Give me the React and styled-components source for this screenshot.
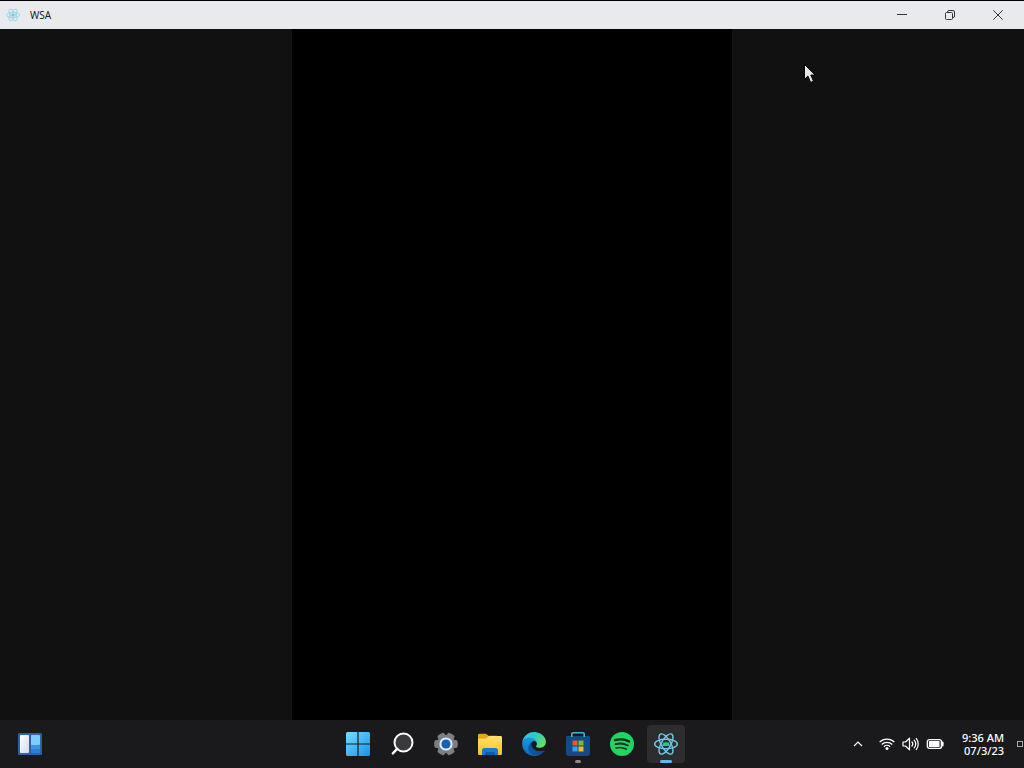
import React from 'react';
import styled, { createGlobalStyle } from 'styled-components';

const GlobalStyle = createGlobalStyle`
  * { box-sizing: border-box; }
  body {
    margin: 0;
    background: #000;
    font-family: "Noto Sans", "Open Sans", sans-serif;
  }
  button { font: inherit; }
`;

const Desktop = styled.div`
  position: relative;
  display: flex;
  flex-direction: column;
  min-height: 100vh;
`;

const TitleBar = styled.header`
  display: flex;
  align-items: center;
  height: 29px;
  padding: 0 2px 0 6px;
  border-top: 1px solid #000;
  background: #e8eaed;
  color: #202124;
`;

const AppTitle = styled.h1`
  flex: 1;
  margin: 0 0 0 10px;
  font-size: 10px;
  font-weight: 400;
  line-height: 14px;
`;

const WindowButton = styled.button`
  display: grid;
  place-items: center;
  width: 48px;
  height: 28px;
  padding: 0;
  border: 0;
  background: transparent;
  color: #333538;
`;

const Content = styled.main`
  display: flex;
  flex: 1;
  justify-content: center;
  background: #111;
`;

const PhoneScreen = styled.section`
  width: 43%;
  background: #000;
`;

const Taskbar = styled.footer`
  display: grid;
  grid-template-columns: 1fr auto 1fr;
  align-items: center;
  height: 48px;
  background: #1a1a1c;
  color: #fff;
`;

const TaskbarStart = styled.div`
  padding-left: 11px;
`;

const Apps = styled.nav`
  display: flex;
  gap: 6px;
`;

const AppButton = styled.button`
  position: relative;
  display: grid;
  place-items: center;
  width: 38px;
  height: 38px;
  padding: 0;
  border: 0;
  border-radius: 4px;
  background: ${({ $active }) => ($active ? '#2d2d30' : 'transparent')};
`;

const Indicator = styled.span`
  position: absolute;
  bottom: 0;
  left: 50%;
  width: ${({ $active }) => ($active ? '12px' : '6px')};
  height: 3px;
  border-radius: 2px;
  background: ${({ $active }) => ($active ? '#5bbcf5' : '#8b8b8b')};
  transform: translateX(-50%);
`;

const Tray = styled.div`
  display: flex;
  align-items: center;
  justify-content: flex-end;
`;

const TrayButton = styled.button`
  display: grid;
  place-items: center;
  width: ${({ $wide }) => ($wide ? '34px' : '24px')};
  height: 38px;
  padding: 0;
  border: 0;
  background: transparent;
  color: #fff;
`;

const Clock = styled.button`
  display: flex;
  flex-direction: column;
  align-items: flex-end;
  width: 42px;
  margin: 0 13px 0 15px;
  padding: 0;
  border: 0;
  background: transparent;
  color: #fff;
  white-space: nowrap;
`;

const ClockLine = styled.time`
  font-size: 11px;
  font-weight: 500;
  line-height: 13px;
`;

const ShowDesktop = styled.button`
  width: 6px;
  height: 6px;
  margin-right: 1px;
  padding: 0;
  border: 1px solid #a8a8a8;
  background: transparent;
`;

const Pointer = styled.svg`
  position: absolute;
  top: 63px;
  left: 803px;
  pointer-events: none;
`;

function ReactLogo({ size, color, strokeWidth, center }) {
  return (
    <svg width={size} height={size} viewBox="0 0 24 24" fill="none" stroke={color} strokeWidth={strokeWidth} aria-hidden="true">
      <ellipse cx="12" cy="12" rx="11.3" ry="4.7" />
      <ellipse cx="12" cy="12" rx="11.3" ry="4.7" transform="rotate(60 12 12)" />
      <ellipse cx="12" cy="12" rx="11.3" ry="4.7" transform="rotate(120 12 12)" />
      {center}
    </svg>
  );
}

const androidHead = (
  <g>
    <path d="M8.2 14a3.8 3.8 0 0 1 7.6 0Z" fill="#2fc58a" stroke="none" />
    <path d="m9.500 11-.8-1.200m5.800 1.200.8-1.200" stroke="#2fc58a" strokeWidth=".7" />
  </g>
);

function WidgetsIcon() {
  return (
    <svg width="24" height="22" viewBox="0 0 24 22" aria-hidden="true">
      <defs>
        <linearGradient id="widgetPane" x1="0" y1="0" x2="1" y2="1">
          <stop stopColor="#fff" />
          <stop offset="1" stopColor="#d4d9ef" />
        </linearGradient>
      </defs>
      <rect width="24" height="22" rx="1.5" fill="#2c62a6" />
      <rect x="2" y="2" width="9" height="18" rx=".8" fill="url(#widgetPane)" />
      <rect x="13" y="2" width="9" height="10" rx=".8" fill="#7dcdfa" />
      <path d="M13 12h9v7a1 1 0 0 1-1 1h-8Z" fill="#3b95e3" />
      <path d="M13 16h9v3a1 1 0 0 1-1 1h-8Z" fill="#2d7fd1" />
    </svg>
  );
}

function StartIcon() {
  return (
    <svg width="24" height="24" viewBox="0 0 24 24" aria-hidden="true">
      <defs>
        <linearGradient id="startBlue" gradientUnits="userSpaceOnUse" x1="0" y1="0" x2="24" y2="24">
          <stop stopColor="#77dcff" />
          <stop offset="1" stopColor="#1593ea" />
        </linearGradient>
      </defs>
      <path
        fill="url(#startBlue)"
        d="M1.5 0h9.9v11.4H0V1.5A1.5 1.5 0 0 1 1.5 0Zm11.1 0h9.9A1.5 1.5 0 0 1 24 1.5v9.9H12.6ZM0 12.6h11.4V24H1.5A1.5 1.5 0 0 1 0 22.5Zm12.6 0H24v9.9a1.5 1.5 0 0 1-1.5 1.5h-9.9Z"
      />
    </svg>
  );
}

function SearchIcon() {
  return (
    <svg width="24" height="24" viewBox="0 0 24 24" fill="none" stroke="#fff" strokeWidth="2" aria-hidden="true">
      <circle cx="13.5" cy="10.5" r="9" fill="#3a3a3c" />
      <path d="m7.2 16.8-4.4 4.6" strokeWidth="2.4" strokeLinecap="round" />
    </svg>
  );
}

function SettingsIcon() {
  return (
    <svg width="24" height="24" viewBox="0 0 24 24" aria-hidden="true">
      <g fill="#7c7e81">
        <circle cx="12" cy="12" r="9" />
        {[0, 60, 120, 180, 240, 300].map((angle) => (
          <path
            key={angle}
            d="M18 7.500 22.600 8.300a1 1 0 0 1 .8.700 12 12 0 0 1 0 6 1 1 0 0 1-.8.700L18 16.500Z"
            transform={`rotate(${angle} 12 12)`}
          />
        ))}
      </g>
      <circle cx="12" cy="12" r="6.600" fill="#dcecfb" />
      <circle cx="12" cy="12" r="4.600" fill="#1660b4" />
    </svg>
  );
}

function ExplorerIcon() {
  return (
    <svg width="24" height="24" viewBox="0 0 24 24" aria-hidden="true">
      <defs>
        <linearGradient id="folderFront" x1="0" y1="0" x2="0" y2="1">
          <stop stopColor="#ffe069" />
          <stop offset="1" stopColor="#fbc029" />
        </linearGradient>
      </defs>
      <path d="M0 3a1.200 1.200 0 0 1 1.200-1.200h6.200a2 2 0 0 1 1.300.5l1.700 1.500H19V9H0Z" fill="#e6a418" />
      <path d="M0 6.500h7a2.600 2.600 0 0 0 1.800-.7l1.100-1a2.600 2.600 0 0 1 1.800-.7h11.100A1.200 1.200 0 0 1 24 5.300v16.500a1.200 1.200 0 0 1-1.200 1.200H1.200A1.200 1.200 0 0 1 0 21.800Z" fill="url(#folderFront)" />
      <path d="M4 23v-4.500A2.500 2.500 0 0 1 6.500 16h11a2.500 2.500 0 0 1 2.500 2.500V23Z" fill="#1878cc" />
      <path d="M7 23v-1.500a1.500 1.500 0 0 1 1.500-1.500h7a1.500 1.500 0 0 1 1.500 1.500V23Z" fill="#0d5ba4" />
    </svg>
  );
}

function EdgeIcon() {
  return (
    <svg width="24" height="24" viewBox="0 0 256 258" aria-hidden="true">
      <defs>
        <linearGradient id="edgeDark" x1="0" y1="0" x2="1" y2="0">
          <stop stopColor="#0c59a4" />
          <stop offset="1" stopColor="#114a8b" />
        </linearGradient>
        <linearGradient id="edgeBlue" x1=".6" y1="0" x2=".4" y2="1">
          <stop stopColor="#1b9de2" />
          <stop offset=".5" stopColor="#1385d6" />
          <stop offset="1" stopColor="#0a6cc0" />
        </linearGradient>
        <linearGradient id="edgeGreen" x1="0" y1=".2" x2="1" y2=".6">
          <stop stopColor="#35c1f1" />
          <stop offset=".5" stopColor="#2fc8c3" />
          <stop offset="1" stopColor="#66e35c" />
        </linearGradient>
      </defs>
      <path fill="url(#edgeDark)" d="M235.68 195.46a93.73 93.73 0 0 1-10.54 4.71 101.87 101.87 0 0 1-35.9 6.46c-47.32 0-88.54-32.55-88.54-74.32A31.48 31.48 0 0 1 117.13 105c-42.8 1.8-53.8 46.4-53.8 72.53 0 73.88 68.09 81.37 82.76 81.37 7.91 0 19.84-2.3 27-4.56l1.31-.44a128.34 128.34 0 0 0 66.6-52.8 4 4 0 0 0-5.32-5.64Z" />
      <path fill="url(#edgeBlue)" d="M105.73 241.42a79.2 79.2 0 0 1-22.74-21.34 80.72 80.72 0 0 1 29.53-120c3.12-1.47 8.45-4.13 15.54-4a32.35 32.35 0 0 1 25.69 13 31.88 31.88 0 0 1 6.36 18.66c0-.21 24.46-79.6-80-79.6-43.9 0-80 41.66-80 78.21a130.15 130.15 0 0 0 12.11 56 128 128 0 0 0 156.38 67.11 75.55 75.55 0 0 1-62.78-8Z" />
      <path fill="url(#edgeGreen)" d="M152.33 148.86c-.81 1.05-3.3 2.5-3.3 5.66 0 2.61 1.7 5.12 4.72 7.23 14.38 10 41.49 8.68 41.56 8.68a59.56 59.56 0 0 0 30.27-8.35 61.38 61.38 0 0 0 30.43-52.88c.26-22.41-8-37.31-11.34-43.91C223.46 23.84 177.72 0 128 0A128 128 0 0 0 0 126.2c.48-36.54 36.8-66.05 80-66.05 3.5 0 23.46.34 42 10.07 16.34 8.58 24.9 18.94 30.85 29.21 6.18 10.67 7.28 24.15 7.28 29.52 0 5.37-2.74 13.33-7.8 19.91Z" />
    </svg>
  );
}

function StoreIcon() {
  return (
    <svg width="24" height="24" viewBox="0 0 24 24" aria-hidden="true">
      <defs>
        <linearGradient id="storeBag" x1="0" y1="0" x2="0" y2="1">
          <stop stopColor="#124a82" />
          <stop offset="1" stopColor="#17498c" />
        </linearGradient>
      </defs>
      <path d="M1 4h22a1 1 0 0 1 1 1v15.500a3.500 3.500 0 0 1-3.500 3.500h-17A3.500 3.500 0 0 1 0 20.500V5a1 1 0 0 1 1-1Z" fill="url(#storeBag)" />
      <path d="M5.800 5V2A1.200 1.200 0 0 1 7 .8h10A1.200 1.200 0 0 1 18.200 2v3" fill="none" stroke="#45b4dc" strokeWidth="1.500" />
      <path d="M6.500 8.500h5v5h-5Z" fill="#e8562c" />
      <path d="M12.500 8.500h5v5h-5Z" fill="#7eb72d" />
      <path d="M6.500 14.500h5v5h-5Z" fill="#2ea4e4" />
      <path d="M12.500 14.500h5v5h-5Z" fill="#f8b51e" />
    </svg>
  );
}

function SpotifyIcon() {
  return (
    <svg width="24" height="24" viewBox="0 0 24 24" fill="none" stroke="#17281d" strokeLinecap="round" aria-hidden="true">
      <circle cx="12" cy="12" r="12" fill="#1ed760" stroke="none" />
      <path d="M5 8.200c4.800-1.400 10.200-.9 14.200 1.300" strokeWidth="2.300" />
      <path d="M5.500 12.200c4.200-1.200 8.700-.7 12.300 1.300" strokeWidth="1.900" />
      <path d="M6 15.900c3.600-.9 7.200-.6 10.300 1.200" strokeWidth="1.500" />
    </svg>
  );
}

const apps = [
  { name: 'Start', icon: <StartIcon /> },
  { name: 'Search', icon: <SearchIcon /> },
  { name: 'Settings', icon: <SettingsIcon /> },
  { name: 'File Explorer', icon: <ExplorerIcon /> },
  { name: 'Microsoft Edge', icon: <EdgeIcon /> },
  { name: 'Microsoft Store', icon: <StoreIcon />, running: true },
  { name: 'Spotify', icon: <SpotifyIcon /> },
  {
    name: 'WSA',
    icon: <ReactLogo size={24} color="#70c6e6" strokeWidth={1.4} center={androidHead} />,
    running: true,
    active: true,
  },
];

export default function App() {
  return (
    <Desktop>
      <GlobalStyle />
      <TitleBar>
        <ReactLogo
          size={14}
          color="#8ed8e6"
          strokeWidth={1.5}
          center={<circle cx="12" cy="12" r="3" fill="#79cdd8" stroke="none" />}
        />
        <AppTitle>WSA</AppTitle>
        <WindowButton type="button" aria-label="Minimize">
          <svg width="10" height="10" viewBox="0 0 10 10" stroke="currentColor">
            <path d="M0 4.500h10" />
          </svg>
        </WindowButton>
        <WindowButton type="button" aria-label="Restore">
          <svg width="12" height="12" viewBox="0 0 12 12" fill="none" stroke="currentColor">
            <rect x="1.500" y="3.500" width="7" height="7" rx="1" />
            <path d="M3.500 3.200V3A1.500 1.500 0 0 1 5 1.500h4A1.500 1.500 0 0 1 10.500 3v4A1.500 1.500 0 0 1 9 8.500" />
          </svg>
        </WindowButton>
        <WindowButton type="button" aria-label="Close">
          <svg width="10" height="10" viewBox="0 0 10 10" stroke="currentColor">
            <path d="m.3.3 9.400 9.400M9.700.3.3 9.700" />
          </svg>
        </WindowButton>
      </TitleBar>
      <Content>
        <PhoneScreen aria-label="Android screen" />
      </Content>
      <Taskbar>
        <TaskbarStart>
          <AppButton type="button" aria-label="Widgets">
            <WidgetsIcon />
          </AppButton>
        </TaskbarStart>
        <Apps aria-label="Apps">
          {apps.map((app) => (
            <AppButton key={app.name} type="button" aria-label={app.name} $active={app.active}>
              {app.icon}
              {app.running && <Indicator $active={app.active} />}
            </AppButton>
          ))}
        </Apps>
        <Tray>
          <TrayButton type="button" aria-label="Hidden icons" $wide>
            <svg width="10" height="10" viewBox="0 0 10 10" fill="none" stroke="currentColor" strokeWidth="1.200">
              <path d="m1 7 4-4 4 4" />
            </svg>
          </TrayButton>
          <TrayButton type="button" aria-label="Network">
            <svg width="16" height="14" viewBox="0 0 16 14" fill="none" stroke="currentColor" strokeWidth="1.200">
              <path d="M.6 5.200a10.400 10.400 0 0 1 14.800 0M2.700 7.500a7.500 7.500 0 0 1 10.600 0M4.900 9.700a4.400 4.400 0 0 1 6.200 0" />
              <circle cx="8" cy="11.600" r="1.500" fill="currentColor" stroke="none" />
            </svg>
          </TrayButton>
          <TrayButton type="button" aria-label="Volume">
            <svg width="18" height="14" viewBox="0 0 18 14" fill="none" stroke="currentColor" strokeWidth="1.200" strokeLinejoin="round">
              <path d="M1 5v4h2.500L7.500 12.800V1.200L3.500 5Z" />
              <path d="M10 5a3 3 0 0 1 0 4M12.200 3.200a6 6 0 0 1 0 7.600M14.200 1.400a8.800 8.800 0 0 1 0 11.200" strokeLinecap="round" />
            </svg>
          </TrayButton>
          <TrayButton type="button" aria-label="Battery">
            <svg width="18" height="12" viewBox="0 0 18 12">
              <rect x="1.400" y="1.600" width="14" height="8.800" rx="2" fill="none" stroke="currentColor" strokeWidth="1.400" />
              <rect x="3" y="3" width="10.500" height="6" rx=".6" fill="currentColor" />
              <path d="M16 3.500h.6a1 1 0 0 1 1 1v3a1 1 0 0 1-1 1H16Z" fill="currentColor" />
            </svg>
          </TrayButton>
          <Clock type="button">
            <ClockLine>9:36 AM</ClockLine>
            <ClockLine>07/3/23</ClockLine>
          </Clock>
          <ShowDesktop type="button" aria-label="Show desktop" />
        </Tray>
      </Taskbar>
      <Pointer width="14" height="22" viewBox="0 0 14 22" aria-hidden="true">
        <path d="M1.500 1.500v14.800l3.400-3.300 2.700 6.400 2.900-1.200-2.700-6.200h4.400Z" fill="#e8e8e8" stroke="#050505" strokeWidth="1" />
      </Pointer>
    </Desktop>
  );
}
